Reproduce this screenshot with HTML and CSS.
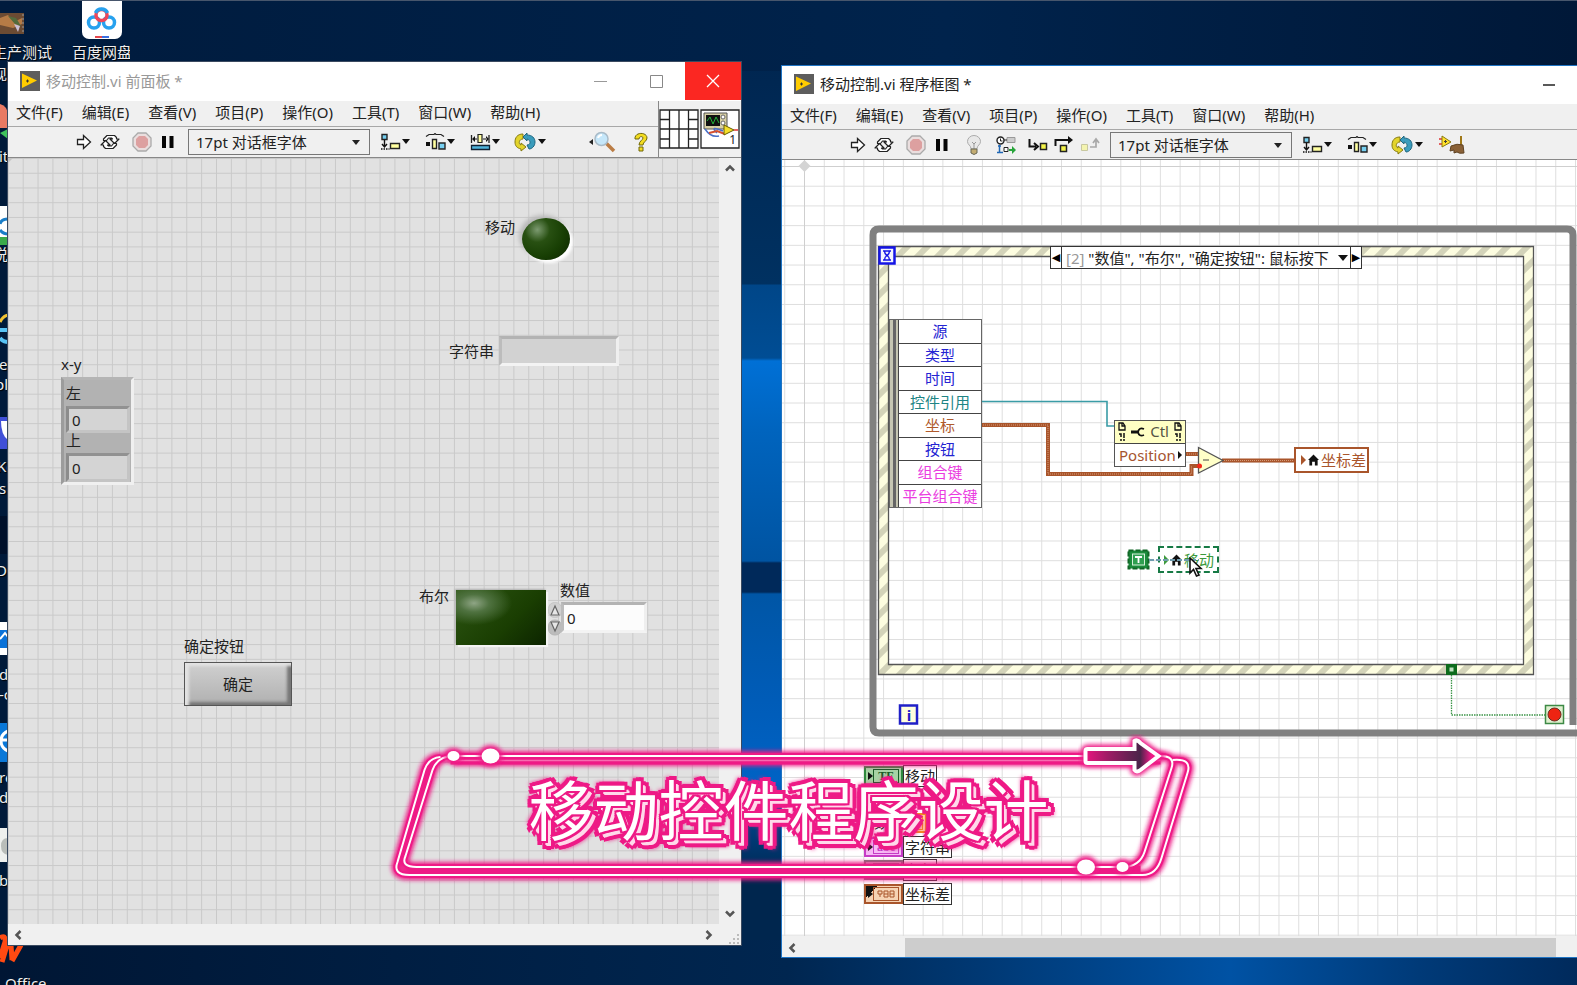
FILE: index.html
```html
<!DOCTYPE html>
<html lang="zh-CN">
<head>
<meta charset="utf-8">
<title>移动控制.vi</title>
<link rel="stylesheet" href="styles.css">
</head>
<body>
<svg class="defs" aria-hidden="true">
  <symbol id="i-vi" viewBox="0 0 20 20"><rect width="20" height="20" fill="#5d5d5d"/><path d="M2 2.500L17 9.500L2 17Z" fill="#fc0"/><path d="M6 10h3M7.500 8.500v3" stroke="#333"/></symbol>
  <symbol id="i-run" viewBox="0 0 16 16"><path d="M1.500 5.500H7.500V1.500L14.500 8L7.500 14.500V10.500H1.500Z" fill="#fff" stroke="#222" stroke-width="1.300"/></symbol>
  <symbol id="i-loop" viewBox="0 0 20 16"><g fill="#fff" stroke="#222" stroke-width="1.200" stroke-linejoin="round"><path d="M3.500 6.500V5L7 1.500H14.500L16.500 3.500V5H19L14.500 9.500L10 5H12.500L11.500 4H8.500L6.500 6.500Z"/><path d="M16.500 9.500V11L13 14.500H5.500L3.500 12.500V11H1L5.500 6.500L10 11H7.500L8.500 12H11.500L13.500 9.500Z"/></g></symbol>
  <symbol id="i-stop" viewBox="0 0 20 20"><path d="M6 1H14L19 6V14L14 19H6L1 14V6Z" fill="#eadede" stroke="#aaa" stroke-width="1.300"/><path d="M7 4H13L16 7V13L13 16H7L4 13V7Z" fill="#dda0a0"/></symbol>
  <symbol id="i-pause" viewBox="0 0 14 14"><path d="M1 1h4v12H1zM8.500 1h4v12h-4z" fill="#050505"/></symbol>
  <symbol id="i-align" viewBox="0 0 30 18"><path d="M2 1.500h5v5H2z" fill="#76cff0" stroke="#222" stroke-width="1.400"/><path d="M4.500 7v7M2 11l2.500 3L7 11M1 16h1.500m1 0h1.500m1 0h1.500m1 0h1" stroke="#111" stroke-width="1.400" fill="none"/><path d="M10.500 10.500h9v5h-9z" fill="#ffffa0" stroke="#222" stroke-width="1.400"/><path d="M22 6h8l-4 5z" fill="#111"/></symbol>
  <symbol id="i-dist" viewBox="0 0 30 18"><path d="M1 3.500L4 1.500H9L10 .5L11 1.500H16L19 3.500" fill="none" stroke="#222" stroke-width="1.200"/><path d="M1 9h4v4H1z" fill="#111"/><path d="M7.500 6.500h4v9h-4z" fill="#ffffa0" stroke="#222" stroke-width="1.400"/><path d="M14 10h6v6h-6z" fill="#76cff0" stroke="#222" stroke-width="1.400"/><path d="M22 6h8l-4 5z" fill="#111"/></symbol>
  <symbol id="i-size" viewBox="0 0 30 18"><path d="M8 1.500h4v8H8z" fill="#ffffa0" stroke="#222" stroke-width="1.200"/><path d="M1.500 2v8M19 2v8" stroke="#222" stroke-width="1.300"/><path d="M2 6l3-3v6zM19 6l-3-3v6zM4 5.500h3v1H4zM13 5.500h4v1h-4z" fill="#111"/><path d="M1.500 12.500h18v4h-18z" fill="#4fb4dc" stroke="#123" stroke-width="1.300"/><path d="M22 6h8l-4 5z" fill="#111"/></symbol>
  <symbol id="i-order" viewBox="0 0 32 20"><path d="M9 2C3 2 1 6 1 10c0 4 2 6 6 7v2l5-4-5-4v2C4 12 5 7 9 7Z" fill="#e3d42c" stroke="#857a12"/><path d="M13 1v2c5 0 8 3 8 7s-3 7-6 7l-2-4c4 0 4-5 0-6v2L9 5Z" fill="#3a9cbc" stroke="#1e6680"/><path d="M24 7h8l-4 5z" fill="#111"/></symbol>
  <symbol id="i-find" viewBox="0 0 28 22"><path d="M1 11l4-3v6z" fill="#222"/><path d="M18 12l8 8" stroke="#bb7d45" stroke-width="3.500"/><circle cx="13.500" cy="8" r="6.500" fill="#c5e7fa" stroke="#a9bbc8" stroke-width="1.500"/><path d="M10 7q1-3 4-3" stroke="#fff" stroke-width="2" fill="none"/></symbol>
  <symbol id="i-help" viewBox="0 0 16 20"><path d="M2 7C1 0 14-.5 14 6c0 3-4 4-4 7H6c0-4 4-5 4-7S6 4 6 7ZM6 15h4v4H6z" fill="#f3dc20" stroke="#6f6708"/></symbol>
  <symbol id="i-bulb" viewBox="0 0 16 20"><path d="M5 14C5 10 1.500 10 1.500 6.500a6.500 6 0 0 1 13 0C14.500 10 11 10 11 14Z" fill="#e8e8e8" stroke="#aaa"/><path d="M6 7l2 2 2-2M8 9v5" stroke="#999" fill="none"/><path d="M5 14h6v4l-3 1.500L5 18z" fill="#c3ac72" stroke="#665"/></symbol>
  <symbol id="i-retain" viewBox="0 0 20 18"><circle cx="4.500" cy="4.500" r="3.500" fill="#fff" stroke="#222" stroke-width="1.400"/><path d="M4.500 2.500v2.500h2" stroke="#222" fill="none"/><path d="M11 1.500h8v5h-8z" fill="#ccc" stroke="#999"/><path d="M8 4h3" stroke="#222"/><path d="M3.500 9v7M1 16.500h6M2 10h3" stroke="#2067b5" stroke-width="1.500"/><path d="M8 11.500h4v4H8z" fill="#fff" stroke="#222"/><path d="M13 13h3v-3l4 4-4 4v-3h-3z" fill="#27a43a"/></symbol>
  <symbol id="i-into" viewBox="0 0 20 16"><path d="M1.500 2v7.500H8M6 6l4 3.500L6 13" fill="none" stroke="#111" stroke-width="2"/><path d="M12.500 6.500h6v6h-6z" fill="#f2f24a" stroke="#222" stroke-width="1.500"/></symbol>
  <symbol id="i-over" viewBox="0 0 20 18"><path d="M1.500 10V4H15" fill="none" stroke="#111" stroke-width="2"/><path d="M14 0l5 4-5 4z" fill="#111"/><path d="M6.500 9.500h6v6h-6z" fill="#f2f24a" stroke="#222" stroke-width="1.500"/></symbol>
  <symbol id="i-out" viewBox="0 0 20 16"><path d="M1.500 7.500h6v6h-6z" fill="#f4f4b0" stroke="#c8c8a0"/><path d="M10 10h6V3M13 6l3-4 3 4" fill="none" stroke="#a8a8a8" stroke-width="1.700"/></symbol>
  <symbol id="i-clean" viewBox="0 0 28 20"><path d="M1 4h3M1 9h3" stroke="#d33" stroke-width="1.500"/><path d="M4 1l9 6-9 5z" fill="#ffe12c" stroke="#8a7a10"/><path d="M6 6.500h3M7.500 5v3" stroke="#443"/><path d="M22 1h2v9h-2z" fill="#a07818"/><path d="M13 11q6-3 12-1l1 8q-5 1-7-1l-3 1 0-3-4 1z" fill="#8a6137" stroke="#5f4324"/></symbol>
  <symbol id="i-home" viewBox="0 0 12 12"><path d="M6 0L12 6H10.500V12H7.500V8H4.500V12H1.500V6H0Z" fill="#111"/></symbol>
</svg>

<main class="desktop">
  <div class="shortcuts">
    <svg class="shortcut-art" width="130" height="985" viewBox="0 0 130 985" aria-hidden="true">
      <rect x="0" y="13" width="24" height="21" fill="#6b4b33"/><path d="M0 18l8-3 6 7 8-4v6l-9 4-13-3z" fill="#b57b46"/><path d="M8 16l8 2 5 8-6-2z" fill="#536b3c"/><path d="M14 24l6 2-2 6z" fill="#c9c0d5"/><path d="M23 14v20" stroke="#999" stroke-dasharray="2 2"/>
      <rect x="82" y="-6" width="40" height="45" rx="7" fill="#fff"/>
      <g fill="none" stroke-width="3.500"><circle cx="94" cy="22.500" r="5.500" stroke="#27a1ee"/><circle cx="109" cy="22.500" r="5.500" stroke="#27a1ee"/><circle cx="101.500" cy="15" r="5.500" stroke="#ef4659"/><path d="M95.500 13a6.500 6.500 0 0 1 12 0" stroke="#27a1ee"/></g>
      <path d="M95 37h7" stroke="#e5474d" stroke-width="2"/><path d="M102 37h7" stroke="#3a6fe0" stroke-width="2"/>
      <path d="M0 104q8 2 8 12v12H0z" fill="#e87a63"/><path d="M0 133l8-4v10z" fill="#3fc25c"/>
      <rect x="0" y="206" width="8" height="39" fill="#fff"/><path d="M8 219q-7 0-8 5M0 230q3 4 8 4" stroke="#1a7ec8" stroke-width="3" fill="none"/><rect x="0" y="237" width="8" height="8" fill="#3aaa4a"/>
      <path d="M0 322q3-6 8-7" stroke="#f1c232" stroke-width="3" fill="none"/><path d="M0 330h8M0 338q3 4 8 4" stroke="#57c3f5" stroke-width="4" fill="none"/>
      <rect x="0" y="417" width="8" height="32" fill="#4050d8"/><path d="M1 421h7v19q-7-5-7-19z" fill="#fff"/>
      <path d="M0 516h8v38H0" fill="#00102a"/>
      <rect x="0" y="622" width="8" height="33" fill="#fff"/><path d="M0 630h8v18H0z" fill="#0a72d8"/><path d="M0 639l5-6 3 4" stroke="#fff" fill="none" stroke-width="2"/>
      <rect x="0" y="723" width="8" height="39" fill="#0a78d8"/><path d="M8 731q-7 3-7 10t7 10M1 740h7" stroke="#fff" stroke-width="3" fill="none"/>
      <rect x="0" y="828" width="8" height="34" fill="#eef0ee"/><path d="M8 838q-7 0-7 8t7 9z" fill="#b9bdb9"/>
      <path d="M0 938q6-4 5 4l-5 16M8 942l-6 20M11 945l1 15M12 961l9-16" stroke="#ff4a12" stroke-width="5" fill="none"/>
    </svg>
    <span class="cap cap-1">生产测试</span><span class="cap cap-2">百度网盘</span><span class="cap cap-3">现</span>
    <span class="cap cap-4">it</span><span class="cap cap-5">说</span><span class="cap cap-6">e</span><span class="cap cap-7">pl</span>
    <span class="cap cap-8">Ke</span><span class="cap cap-9">s</span><span class="cap cap-10">D</span><span class="cap cap-11">d</span><span class="cap cap-12">-c</span>
    <span class="cap cap-13">re</span><span class="cap cap-14">d</span><span class="cap cap-15">b</span><span class="cap cap-16">Office</span>
  </div>

  <section class="window front">
    <header class="titlebar">
      <svg class="app-icon"><use href="#i-vi"/></svg>
      <h1 class="title">移动控制.vi 前面板 *</h1>
      <button class="win-btn" aria-label="最小化"><svg width="14" height="14"><path d="M0 7.500h13" stroke="#999"/></svg></button>
      <button class="win-btn" aria-label="最大化"><svg width="14" height="14"><path d="M.5 1.500h12v12h-12z" fill="none" stroke="#888"/></svg></button>
      <button class="win-btn close" aria-label="关闭"><svg width="14" height="14"><path d="M1 1l12 12M13 1L1 13" stroke="#fff" stroke-width="1.300"/></svg></button>
    </header>
    <div class="chrome">
      <div class="bars">
        <nav class="menubar"><button>文件(F)</button><button>编辑(E)</button><button>查看(V)</button><button>项目(P)</button><button>操作(O)</button><button>工具(T)</button><button>窗口(W)</button><button>帮助(H)</button></nav>
        <div class="toolbar">
          <button class="tool" aria-label="运行"><svg width="16" height="16"><use href="#i-run"/></svg></button>
          <button class="tool" aria-label="连续运行"><svg width="20" height="16"><use href="#i-loop"/></svg></button>
          <button class="tool apart" aria-label="中止"><svg width="20" height="20"><use href="#i-stop"/></svg></button>
          <button class="tool" aria-label="暂停"><svg width="14" height="14"><use href="#i-pause"/></svg></button>
          <span class="font-box"><select class="font-select" aria-label="字体"><option>17pt 对话框字体</option></select></span>
          <button class="tool wide first" aria-label="对齐对象"><svg width="30" height="18"><use href="#i-align"/></svg></button>
          <button class="tool wide" aria-label="分布对象"><svg width="30" height="18"><use href="#i-dist"/></svg></button>
          <button class="tool wide" aria-label="调整对象大小"><svg width="30" height="18"><use href="#i-size"/></svg></button>
          <button class="tool wide" aria-label="重新排序"><svg width="32" height="20"><use href="#i-order"/></svg></button>
          <button class="tool find" aria-label="搜索"><svg width="28" height="22"><use href="#i-find"/></svg></button>
          <button class="tool help" aria-label="帮助"><svg width="16" height="20"><use href="#i-help"/></svg></button>
        </div>
      </div>
      <div class="pane">
        <svg width="81" height="40" viewBox="0 0 81 40" aria-hidden="true">
          <path d="M1 1h38v38H1zM10.500 1v38M20 1v38M29.500 1v38M1 10.500h9.500M1 20h38M1 30h9.500M29.500 10.500H39M29.500 30H39" fill="#fff" stroke="#222" stroke-width="1.300"/>
          <path d="M42 1h38v38H42z" fill="#fff" stroke="#222" stroke-width="1.300"/>
          <path d="M45 4h23v16H45z" fill="#d8d0a4" stroke="#555"/><path d="M47 6h14v11H47z" fill="#111"/><path d="M48 12l3-4 3 7 3-7 3 6" stroke="#25b33a" fill="none"/><circle cx="64" cy="8" r="2" fill="#fff" stroke="#666"/><circle cx="64" cy="14" r="2" fill="#fff" stroke="#666"/>
          <path d="M46 20q6 9 14 7M64 22q-14-6-6 2" stroke="#4a6fc8" stroke-width="1.500" fill="none"/><path d="M50 24l8-2 8 3" stroke="#d5502e" stroke-width="2" fill="none"/><path d="M65 16l10 5-10 5z" fill="#f5df2a" stroke="#665c00"/><path d="M75 21h4" stroke="#d33" stroke-width="1.500"/>
        </svg>
        <span class="pane-num">1</span>
      </div>
    </div>
    <div class="panel">
      <div class="canvas panel-canvas">
        <svg class="fill" aria-hidden="true">
          <defs><pattern id="g1" width="14.870" height="14.730" patternUnits="userSpaceOnUse" x=".8" y="1"><path d="M14.370 0V15M0 14.230H15" stroke="#c9c9c9" fill="none"/></pattern></defs>
          <rect width="100%" height="100%" fill="url(#g1)"/><path d="M0 0h5L0 5z" fill="#c4c4c4"/>
        </svg>
        <span class="lbl l-led">移动</span>
        <span class="led" role="img" aria-label="移动"></span>
        <label class="lbl l-str" for="f-str">字符串</label><input class="well str" id="f-str" readonly>
        <span class="lbl l-xy">x-y</span>
        <div class="cluster">
          <label for="f-x">左</label><input id="f-x" class="num" value="0" readonly>
          <label for="f-y">上</label><input id="f-y" class="num" value="0" readonly>
        </div>
        <span class="lbl l-bool">布尔</span><button class="bool" aria-label="布尔"></button>
        <label class="lbl l-val" for="f-val">数值</label>
        <svg class="spin" width="14" height="34" viewBox="0 0 14 34" aria-hidden="true"><rect x=".5" y=".5" width="13" height="15" rx="6" fill="#d0d0d0" stroke="#c5c5c5"/><rect x=".5" y="18" width="13" height="15" rx="6" fill="#bcbcbc" stroke="#b5b5b5"/><path d="M3 13L7 4l4 9zM3 20h8l-4 9z" fill="#e6e6e6" stroke="#666" stroke-width="1.200"/></svg>
        <input class="well val" id="f-val" value="0">
        <span class="lbl l-ok">确定按钮</span><button class="ok">确定</button>
      </div>
      <div class="vscroll"><button class="arr" aria-label="向上"><svg width="12" height="10"><path d="M2 7.500l4-4 4 4" fill="none" stroke="#555" stroke-width="2.500"/></svg></button><button class="arr" aria-label="向下"><svg width="12" height="10"><path d="M2 2.500l4 4 4-4" fill="none" stroke="#555" stroke-width="2.500"/></svg></button></div>
      <div class="hscroll"><button class="arr" aria-label="向左"><svg width="10" height="12"><path d="M7.500 2l-4 4 4 4" fill="none" stroke="#555" stroke-width="2.500"/></svg></button><span class="track"></span><button class="arr" aria-label="向右"><svg width="10" height="12"><path d="M2.500 2l4 4-4 4" fill="none" stroke="#555" stroke-width="2.500"/></svg></button></div>
      <svg class="grip" width="12" height="12"><path d="M8 2h2M4 6h2M8 6h2M0 10h2M4 10h2M8 10h2" stroke="#bbb" stroke-width="2"/></svg>
    </div>
  </section>

  <section class="window block">
    <header class="titlebar">
      <svg class="app-icon"><use href="#i-vi"/></svg>
      <h1 class="title">移动控制.vi 程序框图 *</h1>
      <button class="win-btn" aria-label="最小化"><svg width="14" height="14"><path d="M1 7h12" stroke="#222" stroke-width="1.500"/></svg></button>
    </header>
    <nav class="menubar"><button>文件(F)</button><button>编辑(E)</button><button>查看(V)</button><button>项目(P)</button><button>操作(O)</button><button>工具(T)</button><button>窗口(W)</button><button>帮助(H)</button></nav>
    <div class="toolbar">
      <button class="tool" aria-label="运行"><svg width="16" height="16"><use href="#i-run"/></svg></button>
      <button class="tool" aria-label="连续运行"><svg width="20" height="16"><use href="#i-loop"/></svg></button>
      <button class="tool apart" aria-label="中止"><svg width="20" height="20"><use href="#i-stop"/></svg></button>
      <button class="tool" aria-label="暂停"><svg width="14" height="14"><use href="#i-pause"/></svg></button>
      <button class="tool apart" aria-label="高亮显示执行过程"><svg width="16" height="20"><use href="#i-bulb"/></svg></button>
      <button class="tool apart" aria-label="保存连线值"><svg width="20" height="18"><use href="#i-retain"/></svg></button>
      <button class="tool apart" aria-label="单步步入"><svg width="20" height="16"><use href="#i-into"/></svg></button>
      <button class="tool" aria-label="单步步过"><svg width="20" height="18"><use href="#i-over"/></svg></button>
      <button class="tool" aria-label="单步步出"><svg width="20" height="16"><use href="#i-out"/></svg></button>
      <span class="font-box"><select class="font-select" aria-label="字体"><option>17pt 对话框字体</option></select></span>
      <button class="tool wide first" aria-label="对齐对象"><svg width="30" height="18"><use href="#i-align"/></svg></button>
      <button class="tool wide" aria-label="分布对象"><svg width="30" height="18"><use href="#i-dist"/></svg></button>
      <button class="tool wide" aria-label="重新排序"><svg width="32" height="20"><use href="#i-order"/></svg></button>
      <button class="tool wide" aria-label="整理程序框图"><svg width="28" height="20"><use href="#i-clean"/></svg></button>
    </div>
    <div class="canvas block-canvas">
      <svg class="fill" aria-hidden="true">
        <defs>
          <pattern id="g2" width="19.770" height="19.710" patternUnits="userSpaceOnUse" x="804" y="167"><path d="M.5 0V20M0 .5H20" stroke="#dedede" fill="none"/></pattern>
          <pattern id="st" width="20" height="20" patternUnits="userSpaceOnUse" x="878" y="247"><rect width="20" height="20" fill="#fdfde0"/><path d="M-3 13L13 -3M7 23L23 7" stroke="#d3d3b9" stroke-width="6"/></pattern>
        </defs>
        <g transform="translate(-782 -161)">
          <rect x="782" y="161" width="3000" height="2000" fill="url(#g2)"/>
          <path d="M782 167.500H3000M804.500 161V3000" stroke="#cfcfcf"/><path d="M804.500 161l6 6-6 6-6-6z" fill="#d4d4d4"/>
          <path d="M1600 734H879q-6 0-6-6V236q0-6 6-6H1567q6 0 6 6V726" fill="none" stroke="#808080" stroke-width="7"/>
          <path d="M878.500 247.500H1533.500V675.500H878.500ZM888.500 257.500V665.500H1523.500V257.500Z" fill="url(#st)" fill-rule="evenodd" stroke="#555" stroke-width="1.300"/>
          <rect x="879.500" y="248.500" width="15" height="16" fill="#f3f3ff" stroke="#1414e6" stroke-width="2.500"/><path d="M883 252h8M883 261h8M884.500 252q0 3 2.500 4.500q-2.500 1.500-2.500 4.500M889.500 252q0 3-2.500 4.500q2.500 1.500 2.500 4.500" stroke="#1414e6" stroke-width="1.400" fill="none"/>
          <path d="M981 402.500H1107V427H1114" stroke="#3a9ca6" stroke-width="1.600" fill="none"/>
          <g fill="none" stroke="#a9552b" stroke-width="4"><path d="M981 426H1048V475H1191.500V467H1199M1185 455H1199M1222 461.500H1294"/></g>
          <g fill="none" stroke="#d59a78" stroke-width="1" stroke-dasharray="1 1"><path d="M981 426H1048V475H1191.500V467M1185 455H1199M1222 461.500H1294"/></g>
          <path d="M1198.500 448.500L1223 461.500L1198.500 474Z" fill="#ffffc8" stroke="#555" stroke-width="1.300"/><path d="M1203 461h6" stroke="#444"/><circle cx="1199.500" cy="467" r="2.500" fill="#f32a1a"/>
          <rect x="1128.500" y="551.500" width="20" height="18" fill="#1c8c3c" stroke="#116626" stroke-dasharray="5 2" stroke-width="2"/><rect x="1132.500" y="555" width="12" height="11" fill="#2f9f50" stroke="#d8f0dc"/><path d="M1135 558h7M1138.500 558v6" stroke="#fff" stroke-width="1.800"/>
          <rect x="1446" y="665" width="11" height="11" fill="#0d6b1c"/><rect x="1449.500" y="668.500" width="4" height="4" fill="#bfe0c0"/>
          <path d="M1451.500 676V716H1546" fill="none" stroke="#3c9548" stroke-width="1.300" stroke-dasharray="1.500 1"/>
          <rect x="1545.500" y="706.500" width="18" height="18" fill="#dff0cf" stroke="#3d8a46" stroke-width="1.500"/><circle cx="1554.500" cy="715.500" r="6.500" fill="#ee2412" stroke="#6a2a22"/>
          <rect x="900" y="706.500" width="17" height="18" fill="#ffffdc" stroke="#2020c8" stroke-width="2.500"/>
        </g>
      </svg>
      <div class="case">
        <button class="case-arr" aria-label="上一个分支">◀</button>
        <span class="case-name"><span class="dim">[2]</span> "数值", "布尔", "确定按钮": 鼠标按下</span><i class="case-drop"></i>
        <button class="case-arr" aria-label="下一个分支">▶</button>
      </div>
      <ul class="events"><li>源</li><li>类型</li><li>时间</li><li class="ref">控件引用</li><li class="pt">坐标</li><li>按钮</li><li class="str-t">组合键</li><li class="str-t">平台组合键</li></ul>
      <div class="prop">
        <div class="prop-head"><svg width="8" height="20" viewBox="0 0 8 20"><path d="M1 1h4l2 3v4H1zM4 1v3h3" fill="none" stroke="#111" stroke-width="1.300"/><path d="M1 12h2v3M3 17v2M6 11v5M6 17v2" stroke="#111" stroke-width="1.500" fill="none"/></svg><svg width="14" height="10" viewBox="0 0 14 10"><path d="M0 3.500h7v3H0z" fill="#111"/><path d="M13 2q-5-2-6 3q1 5 6 3" fill="none" stroke="#111" stroke-width="1.800"/></svg><span>Ctl</span><svg width="8" height="20" viewBox="0 0 8 20"><path d="M1 1h4l2 3v4H1zM4 1v3h3" fill="none" stroke="#111" stroke-width="1.300"/><path d="M1 12h2v3M3 17v2M6 11v5M6 17v2" stroke="#111" stroke-width="1.500" fill="none"/></svg></div>
        <div class="prop-row">Position<i></i></div>
      </div>
      <div class="local diff"><i></i><svg width="11" height="12"><use href="#i-home"/></svg>坐标差</div>
      <div class="local move"><i></i><svg width="11" height="12"><use href="#i-home"/></svg>移动</div>
      <svg class="wire" width="50" height="4" aria-hidden="true"><path d="M0 2H50" stroke="#6f9cae" stroke-width="2" stroke-dasharray="5 2"/></svg>
      <span class="iter">i</span>
      <svg class="cursor" width="14" height="20" viewBox="0 0 14 20" aria-hidden="true"><path d="M1 1V16L4.500 12.500L7.500 19L10 18L7 11.500H12Z" fill="#fff" stroke="#111" stroke-width="1.600"/></svg>
      <ul class="terms">
        <li><span class="tf green">TF</span><b>移动</b></li>
        <li></li>
        <li class="swap"><b class="bare">数值</b><span class="tf orange"></span></li>
        <li><span class="tf pink">abc</span><b>字符串</b></li>
        <li><span class="tf gray">TF</span><b>布尔</b></li>
        <li><span class="tf brown"><svg width="18" height="8"><path d="M1 1h4v3H1zM3 4v3M7 1h4v6H7zM7 4h4M13 1h4v6h-4zM13 4h4" fill="none" stroke="#a9552b"/></svg></span><b>坐标差</b></li>
      </ul>
    </div>
    <div class="hscroll"><button class="arr" aria-label="向左"><svg width="10" height="12"><path d="M7.500 2l-4 4 4 4" fill="none" stroke="#555" stroke-width="2.500"/></svg></button><span class="track"><span class="thumb"></span></span></div>
  </section>

  <div class="banner">
    <svg class="banner-art" viewBox="380 725 817 170" aria-hidden="true">
      <defs><filter id="gl" x="-10%" y="-20%" width="120%" height="140%"><feGaussianBlur stdDeviation="2"/></filter>
      <linearGradient id="ar"><stop offset="0" stop-color="#e8157f"/><stop offset=".3" stop-color="#a01c66"/><stop offset=".75" stop-color="#4b2449"/><stop offset=".9" stop-color="#ee1a86"/></linearGradient>
      <path id="in" d="M453 756H1160Q1175 756 1171 768L1144 852Q1139 867 1122 867H416Q400 867 405 856L432 770Q437 756 453 756Z"/>
      <path id="out" d="M1172 760Q1192 758 1187 773L1161 858Q1156 875 1142 875H409Q392 875 397 862L424 770Q428 758 440 757"/></defs>
      <g fill="none" stroke="#ee1a86"><g filter="url(#gl)" stroke-width="10"><use href="#in"/><use href="#out"/><path d="M453 761H1160"/></g><g stroke-width="6"><use href="#in"/><use href="#out"/><path d="M450 760H1160M413 870H1140" stroke-width="9"/></g></g>
      <g fill="none" stroke="#f66cb0" stroke-width="1.500"><path d="M445 760.500H1160"/></g>
      <g fill="none" stroke="#fff" stroke-width="2"><use href="#in"/><use href="#out"/></g>
      <g fill="#ee1a86" filter="url(#gl)"><ellipse cx="453" cy="756" rx="9" ry="8"/><ellipse cx="490" cy="756" rx="12" ry="11"/><ellipse cx="1085.500" cy="867" rx="12" ry="11"/><ellipse cx="1122" cy="867" rx="9" ry="8"/></g>
      <g fill="#fff"><ellipse cx="453" cy="756" rx="6" ry="5"/><ellipse cx="490" cy="756" rx="9" ry="7.500"/><ellipse cx="1085.500" cy="867" rx="9" ry="7.500"/><ellipse cx="1122" cy="867" rx="6" ry="5"/></g>
      <path d="M1087 749H1134V741Q1137 739 1140 743L1158 756L1140 770Q1136 773 1134 770V763H1087Q1085 763 1085 761V751Q1085 749 1087 749Z" fill="none" stroke="#ee1a86" stroke-width="9" filter="url(#gl)"/>
      <path d="M1087 749H1134V741Q1137 739 1140 743L1158 756L1140 770Q1136 773 1134 770V763H1087Q1085 763 1085 761V751Q1085 749 1087 749Z" fill="url(#ar)" stroke="#fff" stroke-width="4"/>
    </svg>
    <p class="banner-text">移动控件程序设计</p>
  </div>
</main>
</body>
</html>
```
FILE: styles.css
```css
* { box-sizing: border-box; }
body {
  margin: 0;
  font: 15px/18px "Noto Sans", "Noto Sans CJK SC", sans-serif;
  color: #222;
}
button, input, select {
  font: inherit;
  color: inherit;
  border: 0;
  padding: 0;
  margin: 0;
  background: none;
  border-radius: 0;
}
ul { list-style: none; margin: 0; padding: 0; }
svg { display: block; flex: none; }
.defs { position: absolute; width: 0; height: 0; }

.desktop {
  position: relative;
  display: grid;
  grid-template-columns: 733fr 796fr;
  column-gap: 40px;
  padding-left: 8px;
  height: 100vh;
  min-height: 700px;
  overflow: hidden;
  border-top: 1px solid #47566c;
  background:
    linear-gradient(90deg, #001634 0, #002650 50%, #003873 62%, #0052a4 78%, #003a78 90%, #002a5c 100%) bottom / 100% 45px no-repeat,
    linear-gradient(90deg, #001b3d, #00234c 60%, #001838) top / 100% 70px no-repeat,
    linear-gradient(90deg, #001a3a 20px, transparent 20px),
    linear-gradient(#00234c 0, #003161 283px, #004688 284px, #004d94 357px, #0070d6 360px, #0064be 430px, #0054a2 560px, #00295a 562px, #00295a 591px, #0056a6 593px, #005cb8 700px, #0062c4 780px, #003d7c 830px, #00264e 880px);
}

/* desktop shortcuts, mostly hidden behind the windows */
.shortcuts { position: absolute; inset: -1px auto 0 0; width: 130px; overflow: hidden; }
.cap { position: absolute; left: -1px; color: #eee; white-space: nowrap; text-shadow: 1px 1px 1px #000; }
.cap-1 { left: -8px; top: 43px; }
.cap-2 { left: 72px; top: 43px; }
.cap-3 { left: -8px; top: 65px; }
.cap-4 { top: 147px; }
.cap-5 { left: -7px; top: 245px; }
.cap-6 { top: 355px; }
.cap-7 { left: -5px; top: 375px; }
.cap-8 { left: -3px; top: 457px; }
.cap-9 { top: 479px; }
.cap-10 { left: -4px; top: 561px; }
.cap-11 { top: 665px; }
.cap-12 { top: 685px; }
.cap-13 { top: 768px; }
.cap-14 { top: 788px; }
.cap-15 { top: 871px; }
.cap-16 { left: 5px; top: 974px; }

/* windows */
.window { position: relative; display: flex; flex-direction: column; min-width: 0; background: #f0f0f0; }
.front { margin: 61px 0 40px; box-shadow: 0 0 0 1px #3a4a60; }
.block { margin: 64px 0 27px; border: solid #1f74c4; border-width: 1px 0 1px 1px; }
.titlebar { display: flex; align-items: center; flex: none; height: 39px; padding: 0 0 2px 12px; background: #fff; }
.block .titlebar { height: 38px; }
.app-icon { width: 20px; height: 20px; margin-right: 6px; }
.title { flex: 1; margin: 0; font-size: 15px; font-weight: 400; }
.front .title { color: #999; }
.win-btn { display: grid; place-items: center; width: 56px; height: 38px; align-self: flex-start; }
.close { background: #fb2722; }
.chrome { display: flex; flex: none; border-bottom: 1px solid #888; }
.bars { flex: 1; min-width: 0; }
.menubar { display: flex; flex: none; gap: 19px; height: 26px; padding: 0 0 4px 8px; border-bottom: 1px solid #a8a8a8; white-space: nowrap; overflow: hidden; }
.toolbar { display: flex; flex: none; align-items: center; gap: 2px; height: 30px; padding-left: 64px; }
.block .toolbar { border-bottom: 1px solid #888; }
.tool { display: grid; place-items: center; flex: none; width: 24px; height: 26px; }
.apart { margin-left: 6px; }
.wide { width: 34px; margin-left: 9px; }
.wide.first { margin-left: 6px; }
.find { width: 28px; margin-left: auto; }
.help { margin: 0 5px 0 11px; }
.font-box { position: relative; flex: none; width: 182px; height: 26px; margin-left: 6px; border: 1px solid #777; }
.font-box::after { content: ""; position: absolute; right: 9px; top: 10px; border: solid transparent; border-width: 5px 4px 0; border-top-color: #222; }
.font-select { appearance: none; width: 100%; height: 24px; padding-left: 7px; }
.pane { position: relative; width: 83px; padding-top: 8px; border-left: 1px solid #888; }
.pane-num { position: absolute; right: 5px; top: 32px; font-size: 12px; line-height: 14px; }

.canvas { position: relative; overflow: hidden; min-width: 0; min-height: 0; }
.fill { position: absolute; inset: 0; width: 100%; height: 100%; }
.panel { position: relative; display: grid; grid-template: minmax(0, 1fr) 21px / minmax(0, 1fr) 22px; flex: 1; min-height: 0; }
.panel-canvas { background: #e1e1e1; }
.block-canvas { flex: 1; background: #fff; }
.vscroll { display: flex; flex-direction: column; align-items: center; justify-content: space-between; }
.hscroll { display: flex; align-items: center; flex: none; height: 21px; }
.arr { display: grid; place-items: center; width: 20px; height: 20px; }
.track { flex: 1; height: 100%; }
.block .hscroll { padding-top: 2px; }
.thumb { display: block; height: 100%; margin: 0 21px 0 103px; background: #cdcdcd; }
.grip { align-self: end; justify-self: end; }

/* front panel controls */
.lbl { position: absolute; white-space: nowrap; }
.l-led { left: 477px; top: 60px; }
.led { position: absolute; left: 514px; top: 60px; width: 48px; height: 42px; border-radius: 50%; background: radial-gradient(circle at 32% 28%, #7c9a70 0, #285012 28%, #183f04 60%, #0c2400 100%); box-shadow: 3px 3px 3px #fff, -3px -3px 4px #b9b9b9; }
.l-str { left: 441px; top: 184px; }
.well { position: absolute; border: 3px solid; border-color: #b3b3b3 #efefef #f3f3f3 #bcbcbc; }
.str { left: 491px; top: 178px; width: 120px; height: 30px; background: #d2d2d2; }
.l-xy { left: 53px; top: 197px; }
.cluster { position: absolute; left: 53px; top: 219px; width: 73px; height: 108px; display: grid; grid-template-rows: 26px 27px 20px 29px; border: 3px solid; border-color: #b5b5b5 #f0f0f0 #f0f0f0 #9c9c9c; background: #b2b2b2; }
.cluster label { padding-left: 2px; line-height: 26px; }
.cluster label + input + label { line-height: 14px; }
.num { width: 64px; margin-left: 2px; padding-left: 3px; border: 3px solid; border-color: #919191 #c4c4c4 #c4c4c4 #8c8c8c; background: #d4d4d4; }
.l-bool { left: 411px; top: 429px; }
.bool { position: absolute; left: 448px; top: 432px; width: 90px; height: 55px; background: radial-gradient(ellipse 38px 22px at 20% 24%, #8fa585 0, #4f7240 40%, transparent 100%), linear-gradient(135deg, #2c5512, #1a3e02 60%, #0c2400); box-shadow: 2px 2px 1px #f4f4f4, -1px -1px 2px #aaa; }
.l-val { left: 552px; top: 423px; }
.spin { position: absolute; left: 540px; top: 444px; }
.val { left: 553px; top: 444px; width: 86px; height: 31px; padding-left: 3px; background: #fcfcfc; }
.l-ok { left: 176px; top: 479px; }
.ok { position: absolute; left: 176px; top: 504px; width: 108px; height: 44px; border: 1px solid #555; background: linear-gradient(#d0d0d0, #b0b0b0); box-shadow: inset 4px 3px 3px #e2e2e2, inset -4px -3px 3px #777; }

/* block diagram nodes */
.case { position: absolute; left: 268px; top: 86px; display: flex; align-items: center; width: 312px; height: 23px; border: 1px solid #333; background: #fff; }
.case-arr { width: 11px; height: 100%; font: 11px/20px "DejaVu Sans", sans-serif; color: #000; }
.case-arr:first-child { border-right: 1px solid #333; }
.case-arr:last-child { border-left: 1px solid #333; }
.case-name { flex: 1; padding-left: 4px; white-space: nowrap; }
.dim { color: #999; }
.case-drop { margin-right: 2px; border: solid transparent; border-width: 6px 5px 0; border-top-color: #111; }
.events { position: absolute; left: 107px; top: 159px; display: flex; flex-direction: column; width: 93px; height: 189px; padding-left: 8px; border: 1px solid #666; background: linear-gradient(90deg, #c6c6b2 3px, #666 3px, #666 6px, #c6c6b2 6px); color: #2424d2; text-align: center; }
.events li { flex: 1; line-height: 22px; border-left: 1px solid #444; border-bottom: 1px solid #444; background: #fff; white-space: nowrap; }
.events li:last-child { border-bottom: 0; }
.events .ref { color: #208484; }
.events .pt { color: #b05a2c; }
.events .str-t { color: #ea3ce0; }
.prop { position: absolute; left: 332px; top: 260px; width: 72px; height: 47px; border: 1px solid #555; background: #fff; }
.prop-head { display: flex; align-items: center; justify-content: space-between; height: 23px; padding: 0 3px; background: #ffffc4; border-bottom: 1px solid #444; color: #554; }
.prop-head span { line-height: 16px; padding-bottom: 2px; }
.prop-row { display: flex; align-items: center; height: 21px; padding-left: 4px; color: #a5532e; }
.prop-row i { margin-left: 2px; border: solid transparent; border-width: 4px 0 4px 4px; border-left-color: #111; }
.local { position: absolute; display: flex; align-items: center; gap: 2px; padding-left: 5px; background: #fff; white-space: nowrap; }
.local i { border: solid transparent; border-width: 5px 0 5px 5px; border-left-color: currentColor; }
.diff { left: 512px; top: 287px; width: 75px; height: 26px; border: 2px solid #a9552b; color: #a9552b; }
.move { left: 376px; top: 386px; width: 61px; height: 27px; padding-left: 4px; border: 2px dashed #177a45; color: #3d9a3d; }
.wire { position: absolute; left: 367px; top: 398px; }
.iter { position: absolute; left: 118px; top: 546px; width: 18px; line-height: 18px; text-align: center; font-weight: 700; color: #2020c8; }
.cursor { position: absolute; left: 407px; top: 397px; }
.terms { position: absolute; left: 82px; top: 605px; display: flex; flex-direction: column; justify-content: space-between; height: 140px; }
.terms li { display: flex; align-items: center; height: 22px; }
.terms b { font-weight: 400; height: 22px; line-height: 20px; padding: 0 1px; border: 1px solid #333; background: #fff; }
.terms .bare { border: 0; background: none; }
.swap { padding-left: 9px; }
.tf { position: relative; display: grid; place-items: center; width: 39px; height: 20px; padding-left: 5px; border: 2px solid; font: 700 12px/14px "Liberation Serif", serif; }
.tf::before { content: ""; position: absolute; left: 2px; top: 4px; border: solid transparent; border-width: 4px 0 4px 5px; border-left-color: #111; }
.tf::after { content: ""; position: absolute; inset: 1px 2px 1px 7px; border: 1px solid; }
.green { color: #185c26; background: #a6d3a4; border-color: #2f8a3e; }
.orange { width: 22px; color: #f58a1e; background: #ffd7a0; }
.pink { color: #c63cc6; background: #f6b8f6; }
.gray { color: #777; background: #c9bfc4; }
.brown { color: #a9552b; background: linear-gradient(135deg, #111 8px, #f6d3b4 8px); }

/* title caption laid over both windows */
.banner { position: absolute; left: 50%; top: 724px; width: 817px; transform: translateX(-50%); pointer-events: none; }
.banner-art { width: 817px; height: 170px; overflow: visible; }
.banner-text {
  position: absolute; left: 0; right: 0; top: 50px; margin: 0;
  font: 65px/65px "Noto Sans CJK SC", sans-serif; text-align: center; white-space: nowrap; color: #fff;
  text-shadow:
    2px 0 #ee1a86, -2px 0 #ee1a86, 0 2px #ee1a86, 0 -2px #ee1a86, 2px 2px #ee1a86, -2px 2px #ee1a86, 2px -2px #ee1a86, -2px -2px #ee1a86,
    4px 4px #ffd9ea, 5px 5px #ffd9ea,
    5px 0 #ee1a86, -4px 0 #ee1a86, 0 -4px #ee1a86, -3px -3px #ee1a86, 3px -4px #ee1a86, -4px 4px #ee1a86,
    9px 5px #ee1a86, 8px 8px #ee1a86, 5px 9px #ee1a86, 1px 8px #ee1a86, 8px 1px #ee1a86, 4px 7px #ee1a86,
    0 0 4px #ee1a86, -3px -3px 4px #ee1a86, 8px 8px 4px #ee1a86;
}
```
